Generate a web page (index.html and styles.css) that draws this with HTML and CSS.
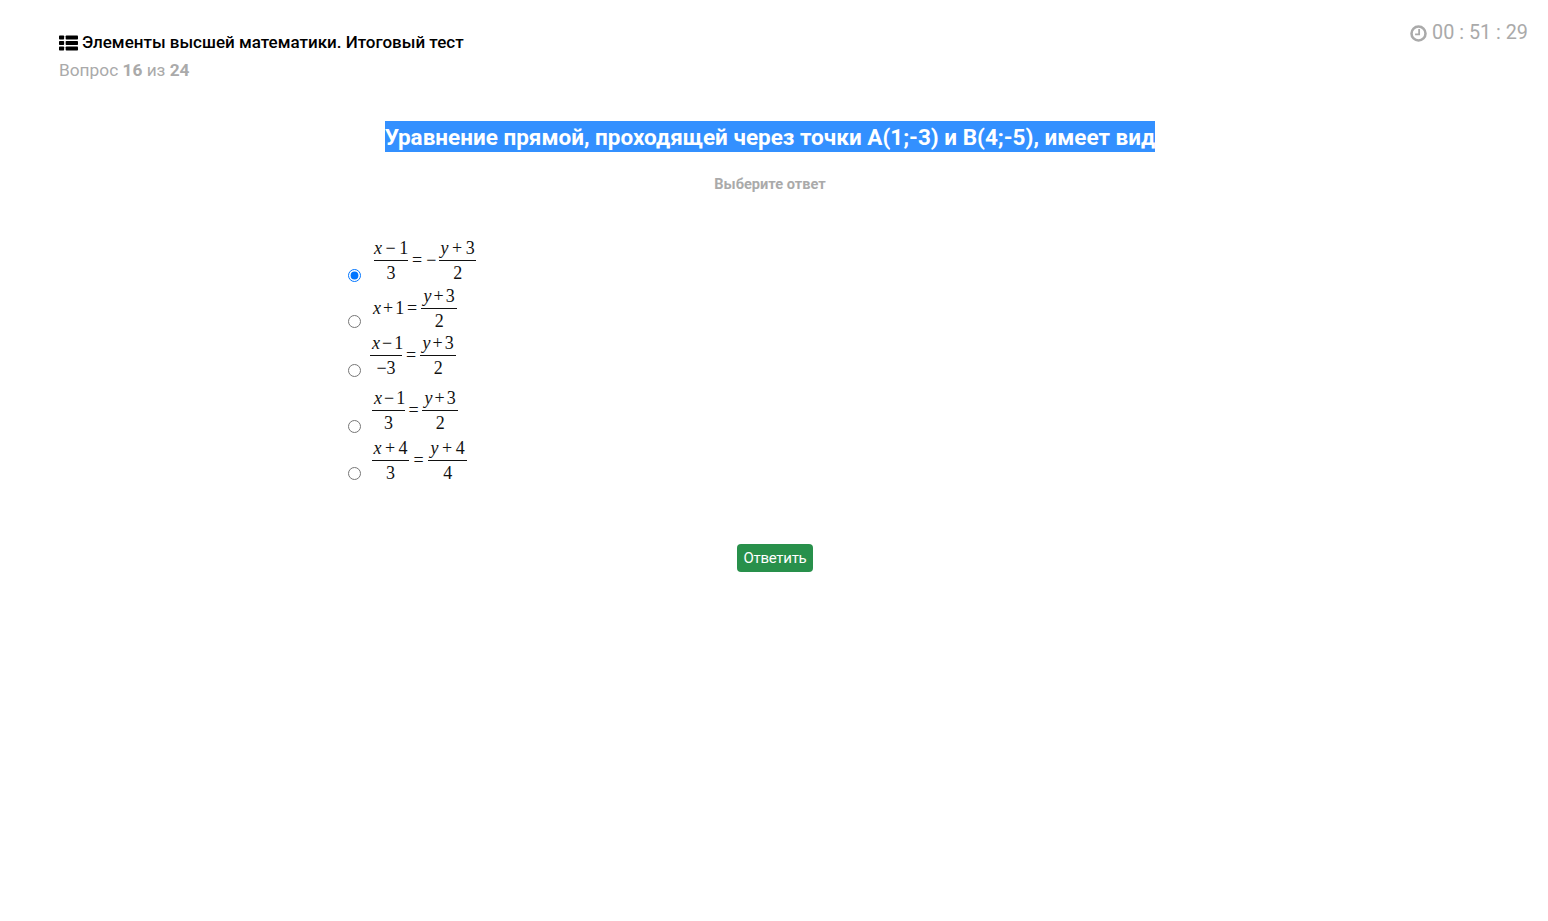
FILE: index.html
```html
<!DOCTYPE html>
<html lang="ru">
<head>
    <meta charset="UTF-8">
    <meta name="viewport" content="width=device-width, initial-scale=1.0">
    <title>Итоговый тест</title>
    <link rel="stylesheet" href="styles.css">
</head>
<body>
    <!-- Таймер -->
    <div class="timer">
        <svg class="timer-icon" viewBox="0 0 16 16" aria-hidden="true">
            <circle cx="8" cy="8" r="6.6" fill="none" stroke="currentColor" stroke-width="2.4"/>
            <path d="M8.6 3.8v5H4.8" fill="none" stroke="currentColor" stroke-width="1.7"/>
        </svg>
        <span>00 : 51 : 29</span>
    </div>

    <header class="test-header">
        <h2 class="test-name">
            <svg class="list-icon" viewBox="0 0 20 16" aria-hidden="true">
                <rect x="0" y="0" width="5.4" height="4.4" rx="0.8"/>
                <rect x="0" y="5.8" width="5.4" height="4.4" rx="0.8"/>
                <rect x="0" y="11.6" width="5.4" height="4.4" rx="0.8"/>
                <rect x="7" y="0" width="13" height="4.4" rx="0.8"/>
                <rect x="7" y="5.8" width="13" height="4.4" rx="0.8"/>
                <rect x="7" y="11.6" width="13" height="4.4" rx="0.8"/>
            </svg>
            Элементы высшей математики. Итоговый тест
        </h2>
        <div class="test-progress">Вопрос <b>16</b> из <b>24</b></div>
    </header>

    <main class="question">
        <h1 class="question-title"><span>Уравнение прямой, проходящей через точки A(1;-3) и B(4;-5), имеет вид</span></h1>
        <p class="question-hint">Выберите ответ</p>

        <form class="answers">
            <label class="answer">
                <input type="radio" name="answer" checked>
                <span class="formula">
                    <span class="frac frac-34"><span class="num"><i>x</i> − 1</span><span class="den">3</span></span>
                    <span class="sign">=</span><span class="minus">−</span>
                    <span class="frac frac-37"><span class="num"><i>y</i> + 3</span><span class="den">2</span></span>
                </span>
            </label>
            <label class="answer">
                <input type="radio" name="answer">
                <span class="formula tight">
                    <span class="plain"><i>x</i>+1</span>
                    <span class="sign">=</span>
                    <span class="frac frac-36"><span class="num"><i>y</i>+3</span><span class="den">2</span></span>
                </span>
            </label>
            <label class="answer">
                <input type="radio" name="answer">
                <span class="formula tight">
                    <span class="frac frac-32"><span class="num"><i>x</i>−1</span><span class="den">−3</span></span>
                    <span class="sign">=</span>
                    <span class="frac frac-36"><span class="num"><i>y</i>+3</span><span class="den">2</span></span>
                </span>
            </label>
            <label class="answer">
                <input type="radio" name="answer">
                <span class="formula tight">
                    <span class="frac frac-33"><span class="num"><i>x</i>−1</span><span class="den">3</span></span>
                    <span class="sign">=</span>
                    <span class="frac frac-36"><span class="num"><i>y</i>+3</span><span class="den">2</span></span>
                </span>
            </label>
            <label class="answer">
                <input type="radio" name="answer">
                <span class="formula">
                    <span class="frac frac-37"><span class="num"><i>x</i> + 4</span><span class="den">3</span></span>
                    <span class="sign">=</span>
                    <span class="frac frac-39"><span class="num"><i>y</i> + 4</span><span class="den">4</span></span>
                </span>
            </label>
            <div class="actions">
                <button type="button" class="btn-answer">Ответить</button>
            </div>
        </form>
    </main>
</body>
</html>
```

FILE: styles.css
```css
* {
    margin: 0;
    padding: 0;
    box-sizing: border-box;
}

body {
    font-family: 'Roboto', 'Noto Sans', sans-serif;
    background-color: #fff;
    color: #000;
    padding: 32px 0 0 59px;
}

/* Таймер */
.timer {
    position: absolute;
    top: 21px;
    right: 20px;
    display: flex;
    align-items: center;
    gap: 5px;
    color: #aaa;
    font-size: 19.8px;
    line-height: 24px;
}

.timer-icon {
    width: 17px;
    height: 17px;
}

/* Шапка */
.test-name {
    display: flex;
    align-items: center;
    gap: 4px;
    font-size: 17px;
    font-weight: 500;
    line-height: 21px;
}

.list-icon {
    width: 19px;
    height: 16px;
    fill: #000;
}

.test-progress {
    margin-top: 6px;
    color: #aaa;
    font-size: 17.3px;
    line-height: 22px;
}

/* Вопрос */
.question {
    width: 844px;
    margin: 40px 0 0 289px;
}

.question-title {
    text-align: center;
    font-size: 22.5px;
    font-weight: 700;
}

.question-title span {
    display: inline-block;
    height: 31px;
    line-height: 32px;
    background-color: #3390ff;
    color: #fff;
}

.question-hint {
    margin-top: 22px;
    text-align: center;
    color: #aaa;
    font-size: 14.6px;
    font-weight: 700;
    line-height: 20px;
}

/* Варианты ответа */
.answers {
    margin-top: 44px;
}

.answer {
    display: flex;
    align-items: flex-end;
    height: 44px;
}

.answer input {
    flex: none;
    width: 13px;
    height: 13px;
    margin-left: 0;
    accent-color: #0075ff;
}

.answer:nth-child(1) input { margin-bottom: 0; }
.answer:nth-child(2) input { margin-bottom: 2px; }
.answer:nth-child(3) input { margin-bottom: 0; }
.answer:nth-child(4) input { margin-bottom: -1px; }
.answer:nth-child(5) input { margin-bottom: 2px; }

.answer:nth-child(1) { margin-bottom: 4px; }
.answer:nth-child(2) { margin-bottom: 3px; }
.answer:nth-child(3) { margin-bottom: 11px; }
.answer:nth-child(4) { margin-bottom: 6px; }

.answer:nth-child(1) .formula { margin-left: 13px; }
.answer:nth-child(2) .formula { margin-left: 12px; }
.answer:nth-child(3) .formula { margin-left: 9px; }
.answer:nth-child(4) .formula { margin-left: 11px; }
.answer:nth-child(5) .formula { margin-left: 11px; }

.answer:nth-child(4) .sign { padding: 0 3.5px; }
.answer:nth-child(5) .sign { padding: 0 4.5px; }

.formula {
    display: flex;
    align-items: center;
    height: 44px;
    font-family: 'Liberation Serif', serif;
    font-size: 18px;
    color: #111;
    white-space: nowrap;
    word-spacing: -1px;
}

.tight .num,
.tight .plain {
    letter-spacing: 2px;
}

.tight .num {
    padding-left: 2px;
}

.frac {
    display: flex;
    flex-direction: column;
    text-align: center;
}

.frac-32 { width: 32px; }
.frac-33 { width: 33px; }
.frac-34 { width: 34px; }
.frac-36 { width: 36px; }
.frac-37 { width: 37px; }
.frac-39 { width: 39px; }

.num {
    height: 23px;
    line-height: 20px;
    border-bottom: 1px solid #111;
}

.den {
    height: 21px;
    line-height: 24px;
}

.sign {
    padding: 0 4px;
    line-height: 20px;
}

.minus {
    width: 13px;
    line-height: 20px;
}

.plain {
    width: 30px;
}

/* Кнопка */
.actions {
    display: flex;
    justify-content: center;
    margin-top: 62px;
    padding-left: 10px;
}

.btn-answer {
    width: 76px;
    height: 28px;
    background-color: #28904b;
    border: none;
    border-radius: 4px;
    color: #fff;
    font-family: inherit;
    font-size: 15px;
    letter-spacing: -0.3px;
}
```
